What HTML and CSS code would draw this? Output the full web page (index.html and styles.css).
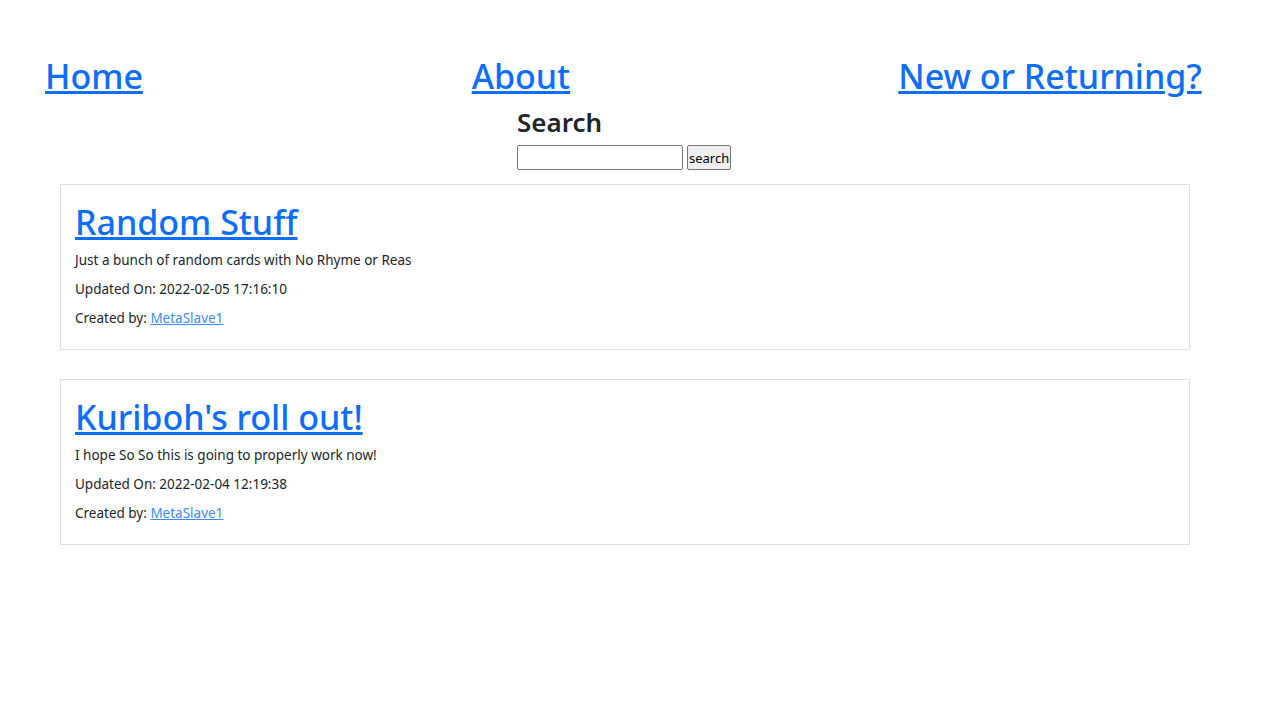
FILE: index.html
```html
<!DOCTYPE html>
<html lang="en">
<head>
<meta charset="utf-8">
<title>Decks</title>
<link rel="stylesheet" href="styles.css">
</head>
<body>
<nav class="topnav">
  <div class="nav-col"><a class="nav-link" href="#">Home</a></div>
  <div class="nav-col"><a class="nav-link" href="#">About</a></div>
  <div class="nav-col"><a class="nav-link" href="#">New or Returning?</a></div>
</nav>
<section class="search">
  <h3 class="search-title">Search</h3>
  <form class="search-form">
    <input class="search-input" type="text"><button class="search-btn" type="button">search</button>
  </form>
</section>
<main class="decks">
  <article class="card">
    <h2 class="card-title"><a href="#">Random Stuff</a></h2>
    <p class="card-text">Just a bunch of random cards with No Rhyme or Reas</p>
    <p class="card-text">Updated On: 2022-02-05 17:16:10</p>
    <p class="card-text">Created by: <a class="author" href="#">MetaSlave1</a></p>
  </article>
  <article class="card">
    <h2 class="card-title"><a href="#">Kuriboh's roll out!</a></h2>
    <p class="card-text">I hope So So this is going to properly work now!</p>
    <p class="card-text">Updated On: 2022-02-04 12:19:38</p>
    <p class="card-text">Created by: <a class="author" href="#">MetaSlave1</a></p>
  </article>
</main>
</body>
</html>
```
FILE: styles.css
```css
* { box-sizing: border-box; }
body {
  margin: 0;
  font-family: "Noto Sans", "Open Sans", sans-serif;
  color: #212529;
  background: #fff;
}
a { color: #0d6efd; }
.topnav {
  display: grid;
  grid-template-columns: repeat(3, 1fr);
  padding-top: 52px;
}
.nav-col { padding-left: 45px; }
.nav-link {
  font-size: 34px;
  font-weight: 500;
  line-height: 48px;
}
.search {
  padding-left: 517px;
}
.search-title {
  margin: 4px 0 0;
  font-size: 26px;
  font-weight: 600;
  line-height: 36px;
}
.search-form { margin: 5px 0 0; display: flex; gap: 4px; }
.search-input {
  width: 166px;
  height: 25px;
  border: 1px solid #767676;
  border-radius: 2px;
  padding: 1px 2px;
}
.search-btn {
  height: 25px;
  padding: 0 1px;
  font-family: "Noto Sans", sans-serif;
  font-size: 13px;
  color: #000;
  background: #efefef;
  border: 1px solid #767676;
  border-radius: 2px;
}
.decks {
  padding: 14px 90px 0 60px;
  display: flex;
  flex-direction: column;
  gap: 29px;
}
.card {
  border: 1px solid #dfdfdf;
  padding: 15px 14px 12px;
  height: 166px;
}
.card-title {
  margin: 0 0 2px;
  font-size: 34px;
  font-weight: 500;
  line-height: 44px;
}
.card-text {
  margin: 0;
  font-size: 13.5px;
  line-height: 29px;
}
.author { color: #3d8bfd; }
```
